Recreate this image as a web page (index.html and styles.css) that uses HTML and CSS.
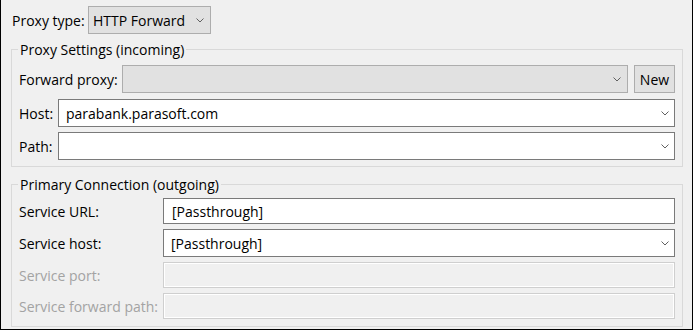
FILE: index.html
```html
<!DOCTYPE html>
<html>
<head>
<meta charset="utf-8">
<link rel="stylesheet" href="styles.css">
</head>
<body>
<div class="frame">
  <div class="toprow">
    <span class="lbl type-lbl">Proxy type:</span>
    <div class="field combo ro type-combo">
      <span class="val">HTTP Forward</span>
      <svg class="chev" width="8" height="5" viewBox="0 0 8 5"><polyline points="0.5,0.5 4,4 7.5,0.5" fill="none" stroke="#606060" stroke-width="1"/></svg>
    </div>
  </div>

  <fieldset class="group g1">
    <legend>Proxy Settings (incoming)</legend>
    <div class="row r-fwd">
      <span class="lbl fwd-lbl">Forward proxy:</span>
      <div class="field combo ro grow">
        <span class="val"></span>
        <svg class="chev" width="8" height="5" viewBox="0 0 8 5"><polyline points="0.5,0.5 4,4 7.5,0.5" fill="none" stroke="#606060" stroke-width="1"/></svg>
      </div>
      <div class="btn">New</div>
    </div>
    <div class="row r-host">
      <span class="lbl short-lbl">Host:</span>
      <div class="field combo edit grow">
        <span class="val">parabank.parasoft.com</span>
        <svg class="chev" width="8" height="5" viewBox="0 0 8 5"><polyline points="0.5,0.5 4,4 7.5,0.5" fill="none" stroke="#606060" stroke-width="1"/></svg>
      </div>
    </div>
    <div class="row r-path">
      <span class="lbl short-lbl">Path:</span>
      <div class="field combo edit grow">
        <span class="val"></span>
        <svg class="chev" width="8" height="5" viewBox="0 0 8 5"><polyline points="0.5,0.5 4,4 7.5,0.5" fill="none" stroke="#606060" stroke-width="1"/></svg>
      </div>
    </div>
  </fieldset>

  <fieldset class="group g2">
    <legend>Primary Connection (outgoing)</legend>
    <div class="row r-url">
      <span class="lbl long-lbl">Service URL:</span>
      <div class="field text edit grow"><span class="val">[Passthrough]</span></div>
    </div>
    <div class="row r-shost">
      <span class="lbl long-lbl">Service host:</span>
      <div class="field combo edit grow">
        <span class="val">[Passthrough]</span>
        <svg class="chev" width="8" height="5" viewBox="0 0 8 5"><polyline points="0.5,0.5 4,4 7.5,0.5" fill="none" stroke="#606060" stroke-width="1"/></svg>
      </div>
    </div>
    <div class="row r-port">
      <span class="lbl long-lbl dis">Service port:</span>
      <div class="field text disabled grow"></div>
    </div>
    <div class="row r-fpath">
      <span class="lbl long-lbl dis">Service forward path:</span>
      <div class="field text disabled grow"></div>
    </div>
  </fieldset>
</div>
</body>
</html>
```

FILE: styles.css
```css
html, body {
  margin: 0;
  padding: 0;
  background: #ffffff;
}

.frame {
  box-sizing: border-box;
  width: 693px;
  height: 330px;
  background: #f0f0f0;
  border: 1px solid #000;
  border-top: 0;
  padding: 6px 9px 0 10px;
  font-family: "Open Sans", "Noto Sans", sans-serif;
  font-size: 14px;
  color: #000;
  line-height: 19px;
}

.toprow {
  display: flex;
  align-items: center;
  height: 28px;
  padding-left: 1px;
}

.lbl {
  flex: none;
  white-space: nowrap;
}

.type-lbl { width: 76px; }
.fwd-lbl { width: 103px; }
.short-lbl { width: 39px; }
.long-lbl { width: 144px; }
.dis { color: #a3a3a3; }

.field {
  box-sizing: border-box;
  display: flex;
  align-items: center;
  white-space: nowrap;
}

.grow { flex: 1; min-width: 0; }

.combo { height: 28px; }
.text { height: 26px; }

.ro {
  background: #e1e1e1;
  border: 1px solid #adadad;
  padding: 0 6px 0 4px;
}

.type-combo { width: 123px; }

.edit {
  background: #ffffff;
  border: 1px solid #7a7a7a;
  padding: 0 5px 0 7px;
}

.text.edit { padding-left: 8px; }

.disabled {
  background: #f0f0f0;
  border: 1px solid #cfcfcf;
  box-shadow: inset 1px 1px 0 #ffffff, inset -1px -1px 0 #ffffff;
}

.val { flex: 1; }

.chev {
  flex: none;
  display: block;
}

.btn {
  box-sizing: border-box;
  flex: none;
  width: 41px;
  height: 28px;
  margin-left: 6px;
  background: #e1e1e1;
  border: 1px solid #adadad;
  display: flex;
  align-items: center;
  justify-content: center;
}

.group {
  box-sizing: border-box;
  margin: 0;
  min-width: 0;
  border: 1px solid #d9d9d9;
  padding: 6px 7px 6px 7px;
}

.group legend {
  padding: 0 2px;
  margin-left: -1px;
  line-height: 19px;
}

.g1 { margin-top: 6px; }
.g2 { margin-top: 8px; padding-top: 4px; padding-bottom: 7px; }

.row {
  display: flex;
  align-items: center;
}

.r-host { margin-top: 6px; }
.r-path { margin-top: 5px; }
.r-shost, .r-port, .r-fpath { margin-top: 5px; }
```
